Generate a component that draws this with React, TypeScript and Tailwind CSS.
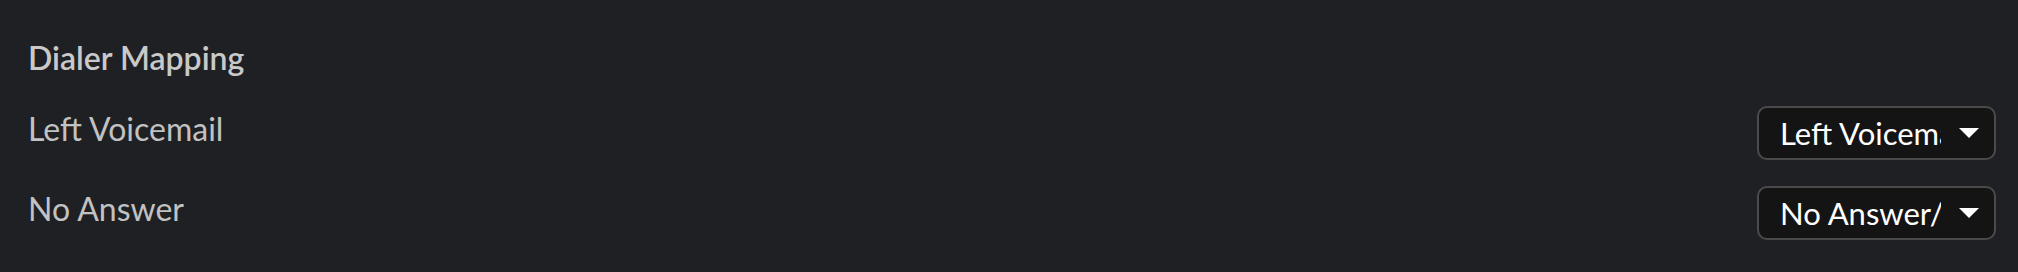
import React from 'react';

const mappings = [
  { label: 'Left Voicemail', value: 'Left Voicemail' },
  { label: 'No Answer', value: 'No Answer/Busy' },
];

const Caret = () => (
  <svg width="20" height="10" viewBox="0 0 20 10" className="shrink-0">
    <path d="M0 0 L20 0 L10 10 Z" fill="#ffffff" />
  </svg>
);

export default function App() {
  return (
    <div className="w-[2018px] h-[272px] bg-[#1f2024] pl-[28px] pr-[22px] pt-[38px] font-['Lato','Liberation_Sans',sans-serif]">
      <h2 className="text-[32px] leading-[40px] font-semibold text-[#c9c9c9]">Dialer Mapping</h2>
      <div className="mt-[28px] flex flex-col gap-[26px]">
        {mappings.map((m) => (
          <div key={m.label} className="flex items-start justify-between h-[54px]">
            <span className="mt-[3px] text-[32px] leading-[40px] text-[#c2c2c2]">{m.label}</span>
            <button className="flex items-center w-[239px] h-[54px] rounded-[10px] border-2 border-[#4a4a4a] bg-[#141414] pl-[21px] pr-[15px]">
              <span className="w-[161px] overflow-hidden whitespace-nowrap text-left text-[31px] leading-[36px] text-white">
                {m.value}
              </span>
              <span className="flex-1" />
              <Caret />
            </button>
          </div>
        ))}
      </div>
    </div>
  );
}
